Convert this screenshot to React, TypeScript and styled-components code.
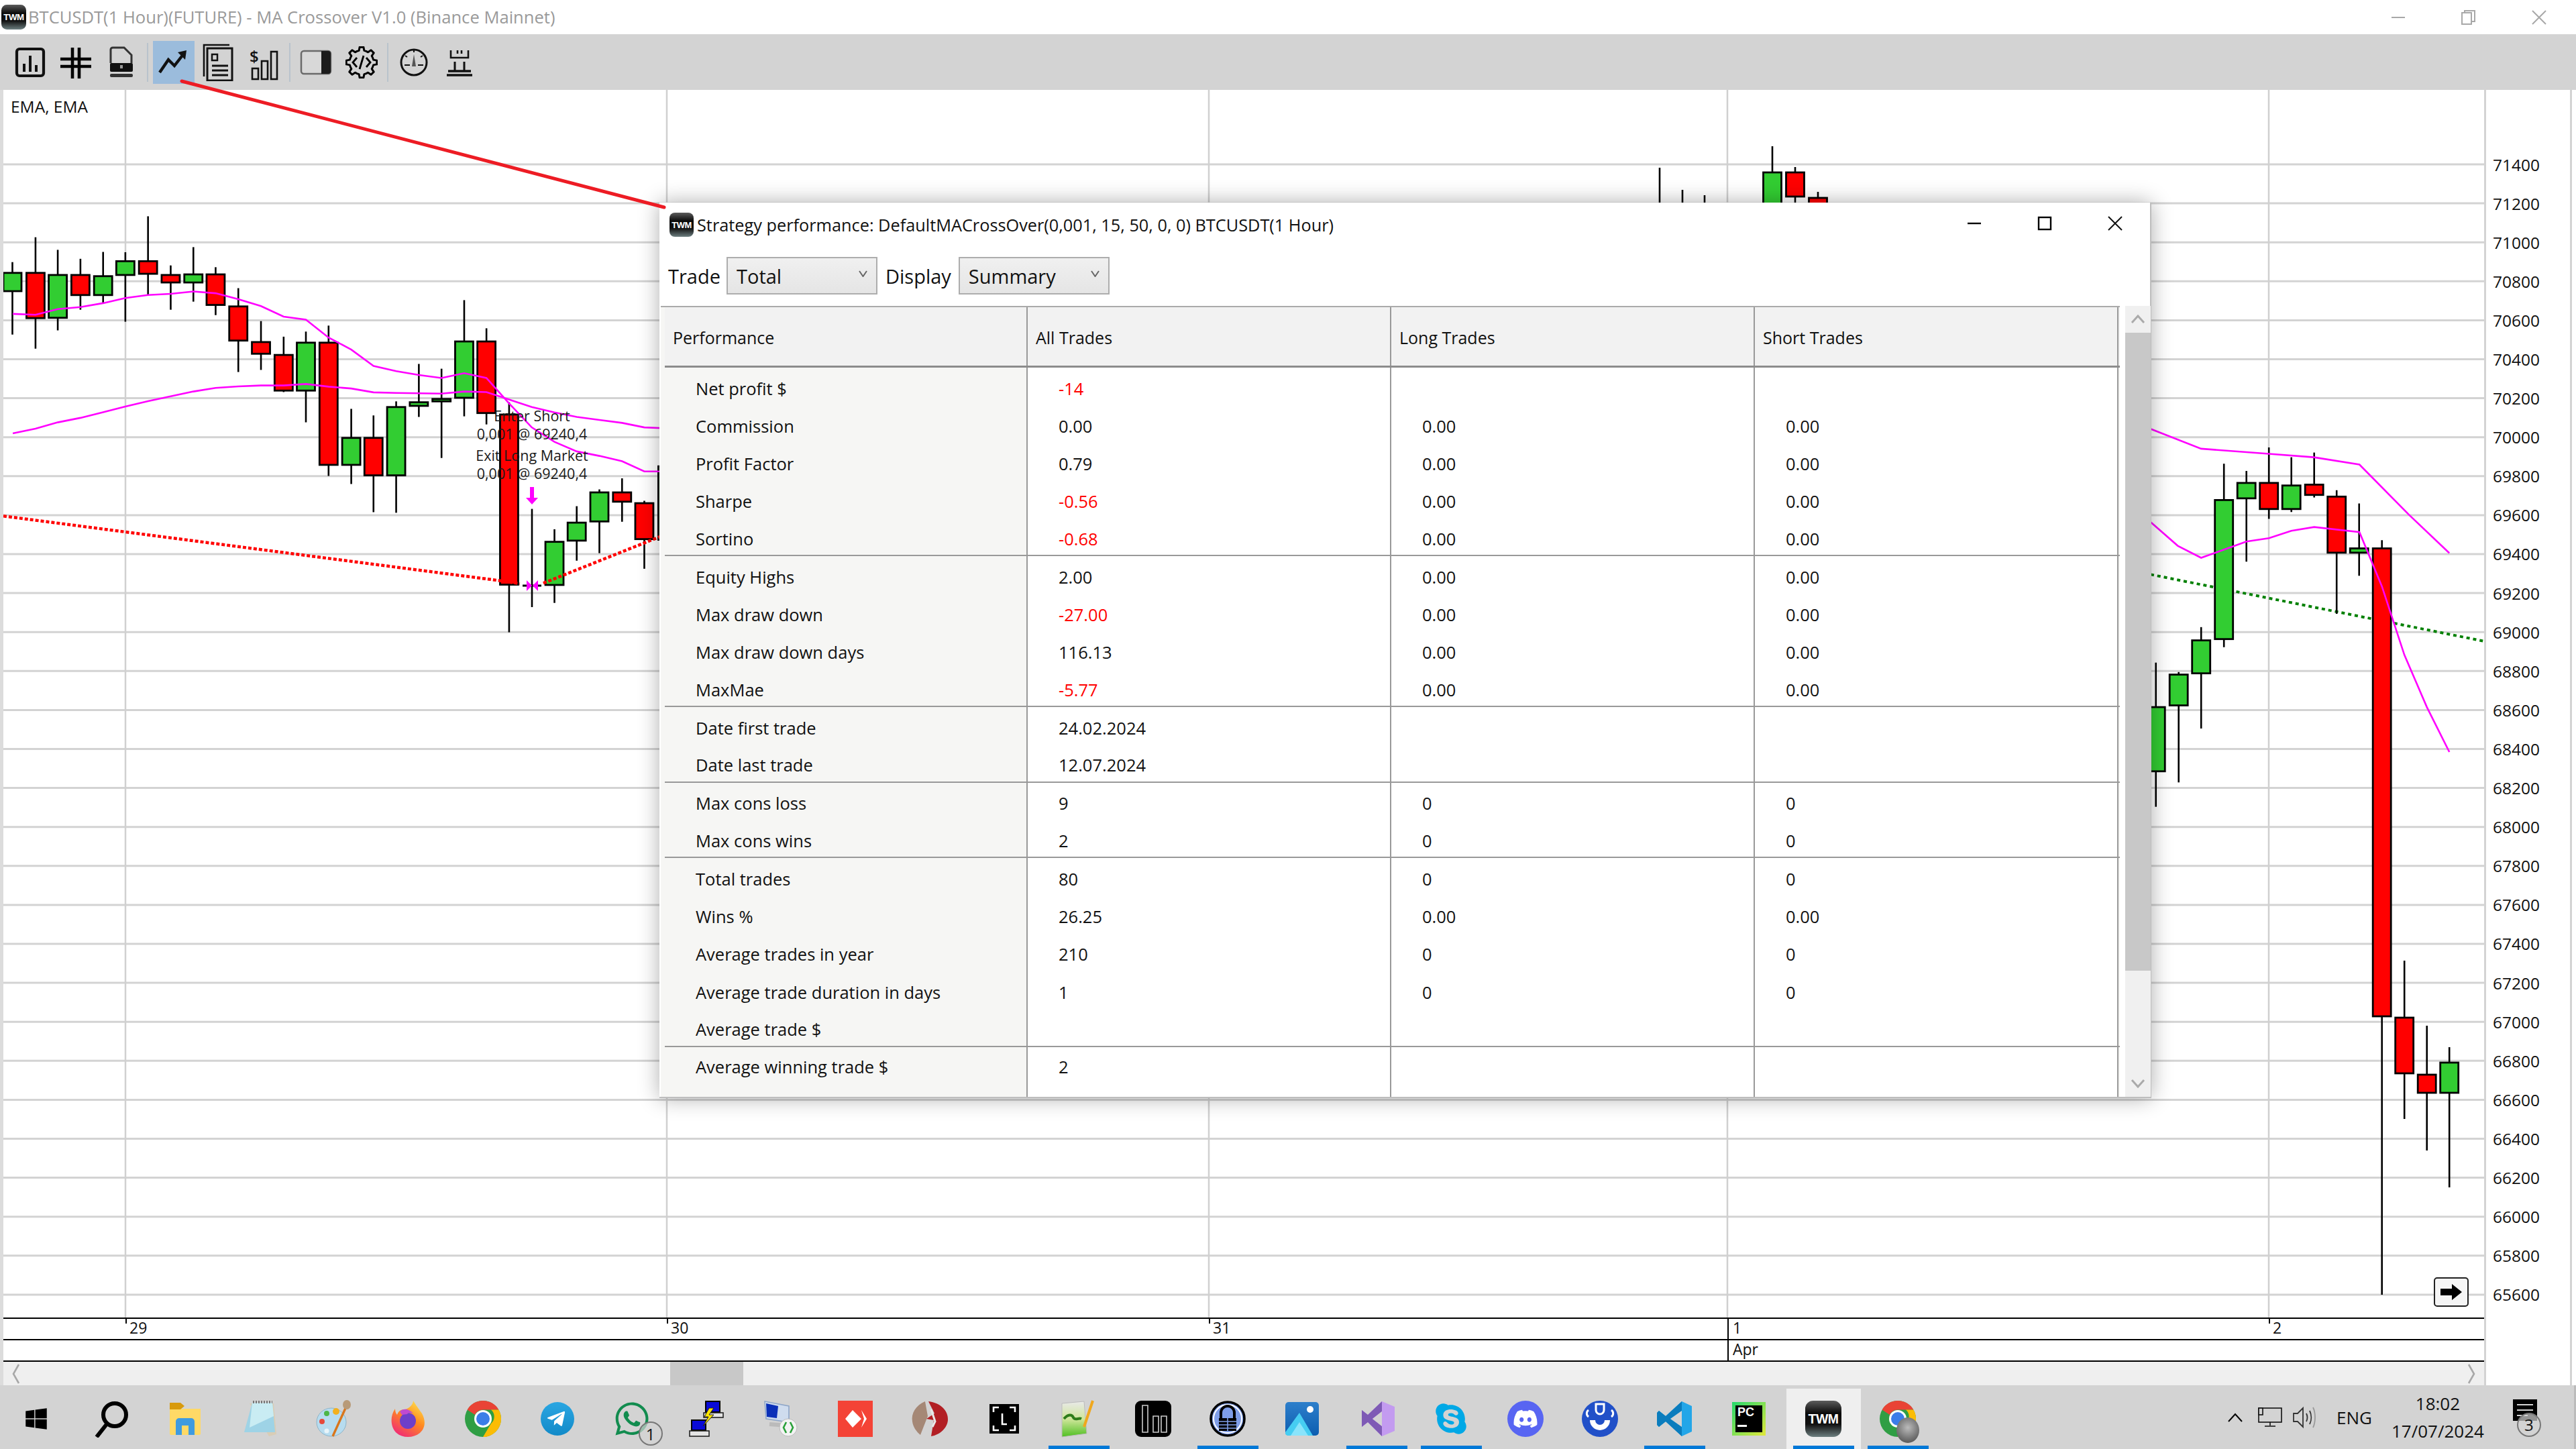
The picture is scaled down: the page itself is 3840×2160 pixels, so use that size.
import React from "react";
import styled, { createGlobalStyle } from "styled-components";
import { FaDiscord, FaSkype, FaTelegramPlane, FaWhatsapp, FaWindows } from "react-icons/fa";

const UI_FONT = `"Open Sans", "Noto Sans", sans-serif`;

const GlobalStyle = createGlobalStyle`
  html, body {
    margin: 0;
    padding: 0;
    background: #fff;
    overflow: hidden;
  }
  * {
    box-sizing: border-box;
  }
`;

// chart maths: price grid + candle spacing measured off the screenshot
const priceToY = (p: number) => 245 + ((71400 - p) / 200) * 58.1;
const PRICES = Array.from({ length: 30 }, (_, i) => 71400 - i * 200);
const DAY_LINES = [187, 994, 1802, 2575, 3382];

type Candle = [number, number, number, number, number, "g" | "r"];

const lx = (z: number) => z / 1.568;
const ly = (z: number) => 280 + z / 2.24;
const rx = (z: number) => 3100 + z / 2.119;
const ry = (z: number) => 600 + z / 1.568;

const leftRaw: Candle[] = [
  [29, 248, 490, 284, 345, "g"],
  [83, 165, 537, 284, 435, "r"],
  [135, 207, 476, 291, 434, "g"],
  [188, 237, 407, 291, 358, "r"],
  [241, 214, 383, 295, 358, "g"],
  [293, 215, 447, 245, 291, "g"],
  [346, 95, 357, 245, 287, "r"],
  [399, 259, 407, 291, 316, "r"],
  [452, 198, 380, 289, 316, "g"],
  [504, 265, 425, 289, 391, "r"],
  [557, 335, 615, 396, 510, "r"],
  [610, 445, 608, 515, 554, "r"],
  [663, 497, 682, 558, 677, "r"],
  [715, 480, 783, 517, 677, "g"],
  [768, 460, 962, 517, 925, "r"],
  [821, 738, 989, 835, 925, "g"],
  [873, 760, 1083, 835, 960, "r"],
  [926, 713, 1085, 732, 960, "g"],
  [979, 588, 765, 716, 728, "g"],
  [1032, 604, 902, 705, 713, "g"],
  [1085, 375, 763, 513, 701, "g"],
  [1137, 469, 790, 513, 752, "r"],
  [1190, 716, 1484, 757, 1325, "r"],
  [1296, 1140, 1386, 1182, 1326, "g"],
  [1348, 1063, 1245, 1118, 1178, "g"],
  [1401, 1007, 1220, 1017, 1114, "g"],
  [1454, 970, 1115, 1017, 1048, "r"],
  [1506, 1045, 1272, 1053, 1173, "r"],
  [1560, 930, 1300, 930, 1175, "g"],
];

const rightRaw: Candle[] = [
  [241, 608, 945, 712, 862, "g"],
  [313, 630, 888, 636, 708, "g"],
  [384, 525, 762, 556, 633, "g"],
  [456, 143, 572, 228, 553, "g"],
  [527, 160, 372, 188, 224, "g"],
  [598, 105, 272, 188, 249, "r"],
  [669, 128, 256, 194, 249, "g"],
  [741, 117, 222, 192, 216, "r"],
  [812, 205, 494, 220, 351, "r"],
  [883, 236, 405, 341, 351, "g"],
];

const candles: Candle[] = [
  ...leftRaw.map(([x, a, b, c, d, k]): Candle => [lx(x), ly(a), ly(b), ly(c), ly(d), k]),
  [2474, 250, 400, 400, 420, "g"],
  [2508, 283, 400, 400, 420, "g"],
  [2541, 291, 400, 400, 420, "g"],
  [2642, 218, 400, 257, 390, "g"],
  [2676, 249, 400, 257, 293, "r"],
  [2710, 286, 400, 295, 390, "r"],
  ...rightRaw.map(([x, a, b, c, d, k]): Candle => [rx(x), ry(a), ry(b), ry(c), ry(d), k]),
  [rx(955), ry(322), 1930, ry(341), 1515, "r"],
  [rx(1026), 1432, 1668, 1517, 1600, "r"],
  [rx(1097), 1529, 1715, 1602, 1629, "r"],
  [rx(1168), 1561, 1770, 1584, 1629, "g"],
];

const fastLeft = [
  [30, 421], [83, 424], [135, 405], [188, 398], [241, 385], [293, 368], [346, 358], [399, 354], [452, 346],
  [504, 352], [557, 372], [610, 395], [663, 430], [715, 440], [768, 500], [821, 540], [873, 595], [926, 612],
  [979, 625], [1032, 635], [1085, 619], [1137, 635], [1190, 720], [1243, 800], [1296, 848], [1348, 880],
  [1401, 895], [1454, 913], [1506, 947], [1560, 947],
];
const slowLeft = [
  [30, 820], [83, 804], [135, 783], [188, 768], [241, 749], [293, 730], [346, 712], [399, 696], [452, 680],
  [504, 668], [557, 663], [610, 660], [663, 660], [715, 655], [768, 664], [821, 670], [873, 683], [926, 685],
  [979, 686], [1032, 687], [1085, 680], [1137, 682], [1190, 707], [1243, 732], [1296, 750], [1348, 765],
  [1401, 775], [1454, 785], [1506, 800], [1560, 803],
];
const fastRight = [[225, 62], [384, 108], [598, 120], [740, 128], [884, 145], [1040, 262], [1168, 352]];
const slowRight = [
  [225, 280], [310, 335], [384, 363], [527, 325], [598, 317], [669, 300], [741, 291], [884, 303], [955, 430],
  [1026, 590], [1097, 712], [1168, 817],
];

const poly = (pts: number[][], fx: (n: number) => number, fy: (n: number) => number) =>
  pts.map(([x, y]) => `${fx(x).toFixed(1)},${fy(y).toFixed(1)}`).join(" ");

const gearPath = (cx: number, cy: number, outer: number, inner: number, teeth: number) => {
  const pts: string[] = [];
  for (let i = 0; i < teeth; i++) {
    const a = (i / teeth) * Math.PI * 2;
    const w = (Math.PI * 2) / teeth;
    [
      [inner, a - w * 0.5],
      [inner, a - w * 0.28],
      [outer, a - w * 0.16],
      [outer, a + w * 0.16],
      [inner, a + w * 0.28],
    ].forEach(([r, t]) => pts.push(`${(cx + r * Math.sin(t)).toFixed(1)},${(cy - r * Math.cos(t)).toFixed(1)}`));
  }
  return pts.join(" ");
};

type Row = [string, string, string, string];

const tableGroups: Row[][] = [
  [
    ["Net profit $", "-14", "", ""],
    ["Commission", "0.00", "0.00", "0.00"],
    ["Profit Factor", "0.79", "0.00", "0.00"],
    ["Sharpe", "-0.56", "0.00", "0.00"],
    ["Sortino", "-0.68", "0.00", "0.00"],
  ],
  [
    ["Equity Highs", "2.00", "0.00", "0.00"],
    ["Max draw down", "-27.00", "0.00", "0.00"],
    ["Max draw down days", "116.13", "0.00", "0.00"],
    ["MaxMae", "-5.77", "0.00", "0.00"],
  ],
  [
    ["Date first trade", "24.02.2024", "", ""],
    ["Date last trade", "12.07.2024", "", ""],
  ],
  [
    ["Max cons loss", "9", "0", "0"],
    ["Max cons wins", "2", "0", "0"],
  ],
  [
    ["Total trades", "80", "0", "0"],
    ["Wins %", "26.25", "0.00", "0.00"],
    ["Average trades in year", "210", "0", "0"],
    ["Average trade duration in days", "1", "0", "0"],
    ["Average trade $", "", "", ""],
  ],
  [["Average winning trade $", "2", "", ""]],
];

function PriceChart() {
  return (
    <svg width={3698} height={1830} viewBox="5 134 3698 1830" style={{ display: "block" }}>
      {PRICES.map((p) => (
        <line key={p} x1={5} x2={3703} y1={priceToY(p)} y2={priceToY(p)} stroke="#d3d3d3" strokeWidth={3} />
      ))}
      {DAY_LINES.map((x) => (
        <line key={x} x1={x} x2={x} y1={134} y2={1964} stroke="#d0d0d0" strokeWidth={2.5} />
      ))}

      <polyline
        points={`3206,${ry(402)} 3703,${ry(558)}`}
        fill="none"
        stroke="#008000"
        strokeWidth={4}
        strokeDasharray="5 5"
      />

      {candles.map(([x, top, bottom, bodyTop, bodyBottom, kind], i) => (
        <g key={i}>
          <line x1={x} x2={x} y1={top} y2={bottom} stroke="#000" strokeWidth={2.6} />
          <rect
            x={x - 13.5}
            y={bodyTop}
            width={27}
            height={bodyBottom - bodyTop}
            fill={kind === "g" ? "#32cd32" : "#ff0000"}
            stroke="#000"
            strokeWidth={2.8}
          />
        </g>
      ))}

      {/* the doji with the two entries on it */}
      <line x1={793} x2={793} y1={ly(1072)} y2={ly(1400)} stroke="#000" strokeWidth={2.6} />
      <line x1={779} x2={807} y1={873} y2={873} stroke="#000" strokeWidth={3} />

      <polyline
        points={`5,${ly(1096)} ${lx(1170)},${ly(1312)} ${lx(1215)},${ly(1322)}`}
        fill="none"
        stroke="#ff0000"
        strokeWidth={4.5}
        strokeDasharray="5 3"
      />
      <polyline
        points={`${lx(1270)},${ly(1320)} ${lx(1560)},${ly(1155)}`}
        fill="none"
        stroke="#ff0000"
        strokeWidth={4.5}
        strokeDasharray="5 3"
      />

      <polyline points={poly(fastLeft, lx, ly)} fill="none" stroke="#ff00ff" strokeWidth={2.6} />
      <polyline points={poly(slowLeft, lx, ly)} fill="none" stroke="#ff00ff" strokeWidth={2.6} />
      <polyline points={poly(fastRight, rx, ry)} fill="none" stroke="#ff00ff" strokeWidth={2.6} />
      <polyline points={poly(slowRight, rx, ry)} fill="none" stroke="#ff00ff" strokeWidth={2.6} />

      <path d="M790 726h6v16h6l-9 10-9-10h6z" fill="#ff00ff" />
      <path d="M785 865l8 8-8 8zM802 865l-8 8 8 8z" fill="#ff00ff" />

      <g fontFamily={UI_FONT} fontSize={21.5} fill="#1a1a1a" textAnchor="middle">
        <text x={793} y={628}>Enter Short</text>
        <text x={793} y={655}>0,001 @ 69240,4</text>
        <text x={793} y={687}>Exit Long Market</text>
        <text x={793} y={714}>0,001 @ 69240,4</text>
      </g>
    </svg>
  );
}

const TB = { stroke: "#111", fill: "none" };

const ToolIcons = {
  bars: (
    <svg width="48" height="48" viewBox="0 0 48 48">
      <rect x="4" y="4" width="40" height="40" rx="4" {...TB} strokeWidth="4.2" />
      <path d="M15 26v12M24 14v24M33 28v10" {...TB} strokeWidth="4" />
    </svg>
  ),
  grid: (
    <svg width="48" height="48" viewBox="0 0 48 48">
      <path d="M19 2v46M29 2v46M1 19h46M1 30h46" stroke="#000" strokeWidth="4.6" fill="none" />
    </svg>
  ),
  lockDoc: (
    <svg width="48" height="48" viewBox="0 0 48 48">
      <path d="M8 25V5a3 3 0 0 1 3-3h17l11 11v12" fill="#d3d3d3" stroke="#333" strokeWidth="3" />
      <rect x="7" y="25" width="34" height="13" rx="2" fill="#111" />
      <rect x="22" y="28" width="4" height="5" fill="#999" />
      <rect x="7" y="41" width="34" height="5" rx="2" fill="#333" />
    </svg>
  ),
  trend: (
    <svg width="48" height="48" viewBox="0 0 48 48">
      <path d="M3 39l13-19 9 9 14-18" {...TB} strokeWidth="4.4" />
      <path d="M30 9l13-3-2 14z" fill="#111" />
    </svg>
  ),
  report: (
    <svg width="48" height="56" viewBox="0 0 48 56">
      <path d="M3 49V2h38" {...TB} strokeWidth="2.6" />
      <rect x="8" y="7" width="37" height="48" {...TB} strokeWidth="3" />
      <rect x="15" y="16" width="8" height="9" {...TB} strokeWidth="2.5" />
      <path d="M15 33h24M15 40h24M15 47h24" {...TB} strokeWidth="3" />
    </svg>
  ),
  money: (
    <svg width="48" height="56" viewBox="0 0 48 56">
      <text x="3" y="28" fontFamily={UI_FONT} fontSize="24" fontWeight="600" fill="#111">$</text>
      <rect x="7" y="37" width="9" height="16" {...TB} strokeWidth="2.6" />
      <rect x="21" y="26" width="9" height="27" {...TB} strokeWidth="2.6" />
      <rect x="35" y="12" width="9" height="41" {...TB} strokeWidth="2.6" />
    </svg>
  ),
  panel: (
    <svg width="48" height="48" viewBox="0 0 48 48">
      <rect x="2" y="7" width="44" height="34" rx="4" fill="#d8d8d8" stroke="#6a6a6a" strokeWidth="2.5" />
      <path d="M32 7h10a4 4 0 0 1 4 4v26a4 4 0 0 1-4 4H32z" fill="#1c1c1c" />
    </svg>
  ),
  gear: (
    <svg width="48" height="48" viewBox="0 0 48 48">
      <polygon points={gearPath(24, 24, 23, 18, 8)} fill="none" stroke="#000" strokeWidth="3" strokeLinejoin="round" />
      <path d="M17 17l-6 7 6 7M31 17l6 7-6 7M27 14l-6 20" fill="none" stroke="#000" strokeWidth="2.8" />
    </svg>
  ),
  gauge: (
    <svg width="48" height="48" viewBox="0 0 48 48">
      <circle cx="24" cy="24" r="19" {...TB} strokeWidth="3" />
      <path d="M24 12l3 18h-6z" fill="#555" />
      <path d="M10 28h8M30 28h8M24 6v3M11 14l3 2M37 14l-3 2" {...TB} strokeWidth="2" />
    </svg>
  ),
  rook: (
    <svg width="48" height="48" viewBox="0 0 48 48">
      <path d="M11 6v11h26V6M21 6v5M27 6v5" {...TB} strokeWidth="2.6" />
      <path d="M17 23v15M31 23v15" {...TB} strokeWidth="3" />
      <path d="M7 37h34M5 43h38" {...TB} strokeWidth="3.4" />
    </svg>
  ),
};

const Icon = {
  search: (
    <svg width="56" height="56" viewBox="0 0 56 56">
      <circle cx="34" cy="22" r="17" fill="none" stroke="#000" strokeWidth="6" />
      <path d="M22 36L7 55" stroke="#000" strokeWidth="6" />
    </svg>
  ),
  folder: (
    <svg width="48" height="48" viewBox="0 0 48 48">
      <path d="M1 9h46v37a2 2 0 0 1-2 2H3a2 2 0 0 1-2-2z" fill="#ffd966" />
      <path d="M1 0h16l6 5-6 5H1z" fill="#d89a0c" />
      <path d="M10 48V28a5 5 0 0 1 5-5h18a5 5 0 0 1 5 5v20h-9V34H19v14z" fill="#3f9be0" />
    </svg>
  ),
  notepad: (
    <svg width="54" height="54" viewBox="0 0 54 54">
      <path d="M12 4h36l4 46-11 3z" fill="#d9cdb6" />
      <path d="M16 3h30l4 44H4z" fill="#9ed3e6" />
      <path d="M16 3h30l2 20L12 40z" fill="#c9ecf3" />
      <path d="M17 2h29" stroke="#777" strokeWidth="4" strokeDasharray="2 2" />
    </svg>
  ),
  paint: (
    <svg width="56" height="56" viewBox="0 0 56 56">
      <ellipse cx="24" cy="33" rx="22" ry="21" fill="#b7dcef" stroke="#8db4c8" />
      <circle cx="17" cy="20" r="4" fill="#4cb648" />
      <circle cx="31" cy="17" r="5" fill="#f2b01e" />
      <circle cx="10" cy="32" r="4" fill="#e64a3c" />
      <circle cx="17" cy="46" r="3.5" fill="#e8f4f9" />
      <path d="M46 10L26 54" stroke="#d9761c" strokeWidth="3.4" />
      <ellipse cx="47" cy="7" rx="6" ry="7" fill="#b89a78" />
    </svg>
  ),
  firefox: (
    <svg width="56" height="56" viewBox="0 0 56 56">
      <defs>
        <linearGradient id="ffx" x1="0.8" y1="0" x2="0.2" y2="1">
          <stop offset="0" stopColor="#ffe14d" />
          <stop offset="0.45" stopColor="#ff8a1f" />
          <stop offset="1" stopColor="#f0247c" />
        </linearGradient>
      </defs>
      <path d="M35 1c5 8 6 9 13 19 6 11 5 22-3 29-10 8-26 8-35 0C1 41 0 24 8 13c0 4 1 7 3 9 2-6 6-8 11-8 4 0 13-6 13-13z" fill="url(#ffx)" />
      <circle cx="27" cy="31" r="12" fill="#6e3fc9" />
      <path d="M15 17c6-6 15-3 20 3-5-2-8-1-9 1l-8 1z" fill="#c04ad0" />
    </svg>
  ),
  chrome: (
    <svg width="56" height="56" viewBox="0 0 56 56">
      <circle cx="28" cy="28" r="27" fill="#2f9e44" />
      <path d="M28 1a27 27 0 0 1 23.4 13.5H28a13.5 13.5 0 0 0-12 7.5L4.6 14.5A27 27 0 0 1 28 1z" fill="#e94335" />
      <path d="M51.4 14.5A27 27 0 0 1 28 55l12-20a13.5 13.5 0 0 0 0-20.5z" fill="#fbbc05" />
      <circle cx="28" cy="28" r="13" fill="#fff" />
      <circle cx="28" cy="28" r="10" fill="#3b7de8" />
    </svg>
  ),
  telegram: (
    <svg width="50" height="50" viewBox="0 0 50 50">
      <defs>
        <linearGradient id="tg" x1="0" y1="0" x2="0" y2="1">
          <stop offset="0" stopColor="#2aa6e2" />
          <stop offset="1" stopColor="#128ac8" />
        </linearGradient>
      </defs>
      <circle cx="25" cy="25" r="25" fill="url(#tg)" />
    </svg>
  ),
  network: (
    <svg width="52" height="54" viewBox="0 0 52 54">
      <rect x="25" y="1" width="21" height="16" fill="#0a0ad8" stroke="#000" strokeWidth="2" />
      <rect x="22" y="18" width="29" height="7" fill="#e4e4e4" stroke="#222" strokeWidth="1.6" />
      <rect x="4" y="29" width="21" height="15" fill="#0a0ad8" stroke="#000" strokeWidth="2" />
      <rect x="1" y="45" width="29" height="8" fill="#e4e4e4" stroke="#222" strokeWidth="1.6" />
      <path d="M30 11l-7 13h6l-8 14 16-17h-7l7-10z" fill="#ffe600" stroke="#222" strokeWidth="1" />
    </svg>
  ),
  remote: (
    <svg width="50" height="54" viewBox="0 0 50 54">
      <path d="M1 1l36 7v24L3 27z" fill="#cfdcee" stroke="#8ea6c8" strokeWidth="1.6" />
      <path d="M3 4l18 4-2 18-15-2z" fill="#0a2fb8" />
      <path d="M8 35l26 2" stroke="#bbb" strokeWidth="6" />
      <circle cx="36" cy="40" r="13" fill="#f3f3f3" stroke="#bbb" />
      <path d="M33 32l-4 8 4 8M39 32l4 8-4 8" fill="none" stroke="#2aa13a" strokeWidth="2.6" />
    </svg>
  ),
  anydesk: (
    <svg width="52" height="54" viewBox="0 0 52 54">
      <rect width="52" height="54" fill="#f44336" />
      <path d="M22 14l13 13-13 13-11-13zM35 14l8 13-8 13 4-13z" fill="#fff" />
    </svg>
  ),
  atv: (
    <svg width="56" height="56" viewBox="0 0 56 56">
      <path d="M21 2C7 8 0 20 2 32c1 8 6 15 12 20L25 24z" fill="#a58876" />
      <path d="M26 2c18 2 30 14 29 28-1 12-12 22-25 24l4-24-11-2 12-8z" fill="#b21f24" />
      <path d="M30 14l6 18-4 8" stroke="#e8e8e8" strokeWidth="3" fill="none" />
    </svg>
  ),
  bracket: (
    <svg width="44" height="44" viewBox="0 0 44 44">
      <rect width="44" height="44" fill="#000" />
      <path d="M6 12V5h8M30 5h8v7M6 32v7h8M30 39h8v-7M19 14v16h7" fill="none" stroke="#fff" strokeWidth="2.6" />
    </svg>
  ),
  notepadpp: (
    <svg width="56" height="56" viewBox="0 0 56 56">
      <defs>
        <linearGradient id="npp" x1="0" y1="0" x2="0" y2="1">
          <stop offset="0" stopColor="#e9e9e9" />
          <stop offset="0.5" stopColor="#cfe69a" />
          <stop offset="1" stopColor="#4fbf22" />
        </linearGradient>
      </defs>
      <path d="M3 5l33-3 4 48-37 5z" fill="url(#npp)" stroke="#bbb" />
      <path d="M49 1L36 40" stroke="#f0a81e" strokeWidth="4" />
      <path d="M6 28c6-7 12-7 14-2s8 0 12 2" fill="none" stroke="#2e7d1a" strokeWidth="4" />
    </svg>
  ),
  bars: (
    <svg width="54" height="54" viewBox="0 0 54 54">
      <rect width="54" height="54" rx="9" fill="#000" />
      <path d="M11 7h8v40h-8zM27 23h8v24h-8zM39 23h8v24h-8z" fill="none" stroke="#ccc" strokeWidth="1.6" />
    </svg>
  ),
  lock: (
    <svg width="54" height="54" viewBox="0 0 54 54">
      <circle cx="27" cy="27" r="25" fill="#7f9ee8" stroke="#000" strokeWidth="3.6" />
      <circle cx="27" cy="27" r="21" fill="none" stroke="#fff" strokeWidth="2" />
      <path d="M17 26V18a10 10 0 0 1 20 0v8" fill="none" stroke="#000" strokeWidth="4" />
      <rect x="14" y="26" width="26" height="19" fill="#000" />
      <path d="M14 31h26M14 36h26M14 41h26M27 26v19" stroke="#7f9ee8" strokeWidth="1.6" />
    </svg>
  ),
  photos: (
    <svg width="50" height="50" viewBox="0 0 50 50">
      <defs>
        <linearGradient id="ph" x1="0" y1="0" x2="0" y2="1">
          <stop offset="0" stopColor="#2d7fcb" />
          <stop offset="1" stopColor="#0c5db0" />
        </linearGradient>
      </defs>
      <rect width="50" height="50" rx="5" fill="url(#ph)" />
      <circle cx="37" cy="11" r="5" fill="#fff" />
      <path d="M0 45L21 16l20 34H4a4 4 0 0 1-4-5z" fill="#46cdf2" />
      <path d="M8 50l13-20 13 20z" fill="#8ae4fb" />
    </svg>
  ),
  vs: (
    <svg width="54" height="54" viewBox="0 0 54 54">
      <path d="M35 1l19 8v36l-19 8-21-21-9 7V14l9 7z" fill="#c39bf0" />
      <path d="M35 1L14 21 5 14v25l9-7 21 21V38L21 27 35 16z" fill="#7e5ab5" />
      <path d="M35 16L21 27l14 11z" fill="#d3d3d3" />
    </svg>
  ),
  pokeball: (
    <svg width="54" height="54" viewBox="0 0 54 54">
      <circle cx="27" cy="27" r="27" fill="#2150c8" />
      <path d="M12 29a15 15 0 0 0 30 0h-8a7 7 0 0 1-14 0z" fill="#fff" />
      <path d="M21 5h12v9a6 6 0 0 1-12 0z" fill="none" stroke="#fff" strokeWidth="3" />
      <path d="M10 14a6 6 0 0 0 0 10M44 14a6 6 0 0 1 0 10" fill="none" stroke="#fff" strokeWidth="3" />
    </svg>
  ),
  vscode: (
    <svg width="54" height="54" viewBox="0 0 54 54">
      <path d="M38 1l15 7v38l-15 7-24-22-10 8-3-3V18l3-3 10 8z" fill="#23a6e8" />
      <path d="M38 1v14L21 27l17 12v14L14 31l-10 8-3-3V18l3-3 10 8z" fill="#0a7cbd" />
      <path d="M38 15v24L21 27z" fill="#d3d3d3" />
    </svg>
  ),
};

export default function App() {
  return (
    <Page>
      <GlobalStyle />

      <TitleBar>
        <TwmLogo $size={37} />
        <TitleText>BTCUSDT(1 Hour)(FUTURE) - MA Crossover V1.0 (Binance Mainnet)</TitleText>
        <WindowButtons>
          <WindowButton>
            <svg width="22" height="22" viewBox="0 0 22 22">
              <path d="M1 11h20" stroke="#a8a8a8" strokeWidth="2" />
            </svg>
          </WindowButton>
          <WindowButton>
            <svg width="22" height="22" viewBox="0 0 22 22">
              <rect x="1" y="4" width="14" height="17" fill="none" stroke="#a8a8a8" strokeWidth="2" />
              <path d="M5 4V1h15v16h-5" fill="none" stroke="#a8a8a8" strokeWidth="2" />
            </svg>
          </WindowButton>
          <WindowButton>
            <svg width="22" height="22" viewBox="0 0 22 22">
              <path d="M1 1l20 20M21 1L1 21" stroke="#a8a8a8" strokeWidth="2" />
            </svg>
          </WindowButton>
        </WindowButtons>
      </TitleBar>

      <Toolbar>
        <ToolSlot>{ToolIcons.bars}</ToolSlot>
        <ToolSlot>{ToolIcons.grid}</ToolSlot>
        <ToolSlot>{ToolIcons.lockDoc}</ToolSlot>
        <ToolSeparator />
        <ToolActive>{ToolIcons.trend}</ToolActive>
        <ToolSlot>{ToolIcons.report}</ToolSlot>
        <ToolSlot>{ToolIcons.money}</ToolSlot>
        <ToolSeparator />
        <ToolSlot>{ToolIcons.panel}</ToolSlot>
        <ToolSlot>{ToolIcons.gear}</ToolSlot>
        <ToolSeparator />
        <ToolSlot>{ToolIcons.gauge}</ToolSlot>
        <ToolSlot>{ToolIcons.rook}</ToolSlot>
      </Toolbar>

      <Workspace>
        <ChartColumn>
          <ChartPane>
            <PriceChart />
            <IndicatorLabel>EMA, EMA</IndicatorLabel>
            <JumpButton>
              <svg width="34" height="26" viewBox="0 0 34 26">
                <path d="M1 8h17V1l15 12-15 12v-7H1z" fill="#000" />
              </svg>
            </JumpButton>
          </ChartPane>
          <TimeRow>
            <TimeCell $width={182} />
            <TimeCell $width={807} $tick>29</TimeCell>
            <TimeCell $width={808} $tick>30</TimeCell>
            <TimeCell $width={773} $tick>31</TimeCell>
            <TimeCell $width={807} $rule>1</TimeCell>
            <TimeCell $width={321} $tick>2</TimeCell>
          </TimeRow>
          <TimeRow>
            <TimeCell $width={182} />
            <TimeCell $width={807} />
            <TimeCell $width={808} />
            <TimeCell $width={773} />
            <TimeCell $width={807} $rule>Apr</TimeCell>
          </TimeRow>
          <HScroll>
            <HArrow>
              <svg width="14" height="34" viewBox="0 0 14 34">
                <path d="M11 3L3 17l8 14" fill="none" stroke="#a8a8a8" strokeWidth="2.6" />
              </svg>
            </HArrow>
            <HThumb />
            <HArrow>
              <svg width="14" height="34" viewBox="0 0 14 34">
                <path d="M3 3l8 14-8 14" fill="none" stroke="#a8a8a8" strokeWidth="2.6" />
              </svg>
            </HArrow>
          </HScroll>
        </ChartColumn>
        <PriceAxis>
          {PRICES.map((p) => (
            <PriceLabel key={p}>{p}</PriceLabel>
          ))}
        </PriceAxis>
      </Workspace>

      <Taskbar>
        <TaskSlot><FaWindows size={36} color="#000" /></TaskSlot>
        <TaskSlot>{Icon.search}</TaskSlot>
        <TaskSlot>{Icon.folder}</TaskSlot>
        <TaskSlot>{Icon.notepad}</TaskSlot>
        <TaskSlot>{Icon.paint}</TaskSlot>
        <TaskSlot>{Icon.firefox}</TaskSlot>
        <TaskSlot>{Icon.chrome}</TaskSlot>
        <TaskSlot>
          {Icon.telegram}
          <PlaneGlyph><FaTelegramPlane size={30} color="#fff" /></PlaneGlyph>
        </TaskSlot>
        <TaskSlot>
          <FaWhatsapp size={56} color="#128c4f" />
          <CountBadge $right={10} $bottom={5}>1</CountBadge>
        </TaskSlot>
        <TaskSlot>{Icon.network}</TaskSlot>
        <TaskSlot>{Icon.remote}</TaskSlot>
        <TaskSlot>{Icon.anydesk}</TaskSlot>
        <TaskSlot>{Icon.atv}</TaskSlot>
        <TaskSlot>{Icon.bracket}</TaskSlot>
        <TaskSlot $running>{Icon.notepadpp}</TaskSlot>
        <TaskSlot>{Icon.bars}</TaskSlot>
        <TaskSlot $running>{Icon.lock}</TaskSlot>
        <TaskSlot>{Icon.photos}</TaskSlot>
        <TaskSlot $running>{Icon.vs}</TaskSlot>
        <TaskSlot $running>
          <FaSkype size={52} color="#00a8e6" />
        </TaskSlot>
        <TaskSlot>
          <DiscordDisc><FaDiscord size={38} color="#fff" /></DiscordDisc>
        </TaskSlot>
        <TaskSlot>{Icon.pokeball}</TaskSlot>
        <TaskSlot $running>{Icon.vscode}</TaskSlot>
        <TaskSlot>
          <PyCharmTile>
            <PyCharmInner>PC<PyCharmBar /></PyCharmInner>
          </PyCharmTile>
        </TaskSlot>
        <TaskSlot $active $running>
          <TwmLogo $size={54} />
        </TaskSlot>
        <TaskSlot $running>
          {Icon.chrome}
          <Avatar />
        </TaskSlot>

        <Tray>
          <TrayIcon>
            <svg width="24" height="16" viewBox="0 0 24 16">
              <path d="M2 14L12 3l10 11" fill="none" stroke="#000" strokeWidth="2" />
            </svg>
          </TrayIcon>
          <TrayIcon>
            <svg width="38" height="30" viewBox="0 0 38 30" style={{ height: 44 }}>
              <rect x="2" y="1" width="34" height="21" fill="none" stroke="#111" strokeWidth="1.6" />
              <rect x="2" y="1" width="6" height="10" fill="#d3d3d3" stroke="#111" strokeWidth="1.6" />
              <path d="M19 22v5M11 28h16" stroke="#111" strokeWidth="1.6" />
            </svg>
          </TrayIcon>
          <TrayIcon>
            <svg width="38" height="40" viewBox="0 0 38 40">
              <path d="M2 14h6l8-8v28l-8-8H2z" fill="none" stroke="#333" strokeWidth="1.8" />
              <path d="M21 14c2 4 2 8 0 12M26 10c3 6 3 14 0 20" fill="none" stroke="#333" strokeWidth="1.8" />
              <path d="M31 5c4 8 4 22 0 30" fill="none" stroke="#999" strokeWidth="1.8" />
            </svg>
          </TrayIcon>
          <TrayLang>ENG</TrayLang>
          <Clock>
            <span>18:02</span>
            <span>17/07/2024</span>
          </Clock>
          <Notification>
            <NoteIcon>
              <svg width="36" height="32" viewBox="0 0 36 32">
                <rect width="36" height="32" fill="#000" />
                <path d="M6 8h24M6 16h24M6 24h16" stroke="#d3d3d3" strokeWidth="2" />
              </svg>
            </NoteIcon>
            <CountBadge $right={-6} $bottom={-2}>3</CountBadge>
          </Notification>
        </Tray>
      </Taskbar>

      <DialogWindow>
        <DialogTitle>
          <TwmLogo $size={36} />
          <DialogTitleText>Strategy performance: DefaultMACrossOver(0,001, 15, 50, 0, 0) BTCUSDT(1 Hour)</DialogTitleText>
          <WindowButtons>
            <DialogButton>
              <svg width="22" height="22" viewBox="0 0 22 22">
                <path d="M1 11h20" stroke="#000" strokeWidth="2.4" />
              </svg>
            </DialogButton>
            <DialogButton>
              <svg width="22" height="22" viewBox="0 0 22 22">
                <rect x="2" y="2" width="18" height="18" fill="none" stroke="#000" strokeWidth="2.4" />
              </svg>
            </DialogButton>
            <DialogButton>
              <svg width="22" height="22" viewBox="0 0 22 22">
                <path d="M1 1l20 20M21 1L1 21" stroke="#111" strokeWidth="2" />
              </svg>
            </DialogButton>
          </WindowButtons>
        </DialogTitle>

        <FilterRow>
          <FilterLabel $gap={9}>Trade</FilterLabel>
          <SelectBox>
            Total
            <SelectChevron>
              <svg width="13" height="10" viewBox="0 0 13 10">
                <path d="M1 1l5.5 8L12 1" fill="none" stroke="#666" strokeWidth="2" />
              </svg>
            </SelectChevron>
          </SelectBox>
          <FilterLabel $gap={11}>Display</FilterLabel>
          <SelectBox>
            Summary
            <SelectChevron>
              <svg width="13" height="10" viewBox="0 0 13 10">
                <path d="M1 1l5.5 8L12 1" fill="none" stroke="#666" strokeWidth="2" />
              </svg>
            </SelectChevron>
          </SelectBox>
        </FilterRow>

        <TableArea>
          <PerfTable>
            <HeaderRow>
              <HeaderCell>Performance</HeaderCell>
              <HeaderCell>All Trades</HeaderCell>
              <HeaderCell>Long Trades</HeaderCell>
              <HeaderCell>Short Trades</HeaderCell>
            </HeaderRow>
            {tableGroups.map((group, g) => (
              <RowGroup key={g} $last={g === tableGroups.length - 1}>
                {group.map(([name, all, long, short]) => (
                  <PerfRow key={name}>
                    <NameCell>{name}</NameCell>
                    <ValueCell $negative={all.startsWith("-")}>{all}</ValueCell>
                    <ValueCell>{long}</ValueCell>
                    <ValueCell>{short}</ValueCell>
                  </PerfRow>
                ))}
              </RowGroup>
            ))}
            <RowGroupFill>
              <NameFill />
              <ValueFill />
              <ValueFill />
              <ValueFill />
            </RowGroupFill>
          </PerfTable>
          <VScroll>
            <VArrow>
              <svg width="22" height="14" viewBox="0 0 22 14">
                <path d="M2 12l9-10 9 10" fill="none" stroke="#aaa" strokeWidth="3" />
              </svg>
            </VArrow>
            <VThumb />
            <VArrow $bottom>
              <svg width="22" height="14" viewBox="0 0 22 14">
                <path d="M2 2l9 10 9-10" fill="none" stroke="#aaa" strokeWidth="3" />
              </svg>
            </VArrow>
          </VScroll>
        </TableArea>
      </DialogWindow>

      <AnnotationLayer width={3840} height={2160} viewBox="0 0 3840 2160">
        <line x1={271} y1={121} x2={990} y2={309} stroke="#ed1c24" strokeWidth={5} strokeLinecap="round" />
      </AnnotationLayer>
    </Page>
  );
}

const Page = styled.div`
  position: relative;
  width: 3840px;
  height: 2160px;
  display: flex;
  flex-direction: column;
  overflow: hidden;
  background: #fff;
  font-family: ${UI_FONT};
  color: #111;
`;

const TitleBar = styled.div`
  height: 51px;
  flex: none;
  display: flex;
  align-items: center;
  padding-left: 2px;
  background: #fff;
`;

const TitleText = styled.div`
  margin-left: 3px;
  font-size: 25.6px;
  color: #9a9a9a;
  flex: 1;
  white-space: nowrap;
`;

const TwmLogo = styled.div.attrs({ children: "TWM" })<{ $size: number }>`
  width: ${(p) => p.$size}px;
  height: ${(p) => p.$size}px;
  flex: none;
  display: flex;
  align-items: center;
  justify-content: center;
  border-radius: ${(p) => p.$size * 0.22}px;
  background: linear-gradient(180deg, #5c5c5c 0%, #0a0a0a 35%, #111 65%, #6d7f80 100%);
  color: #fff;
  font-family: "Liberation Sans", sans-serif;
  font-weight: 700;
  font-size: ${(p) => p.$size * 0.36}px;
  letter-spacing: -0.5px;
`;

const WindowButtons = styled.div`
  display: flex;
  flex: none;
`;

const WindowButton = styled.div`
  width: 105px;
  height: 48px;
  display: flex;
  align-items: center;
  justify-content: center;
  &:last-child {
    margin-right: 3px;
  }
`;

const Toolbar = styled.div`
  height: 83px;
  flex: none;
  display: flex;
  align-items: center;
  padding-left: 11px;
  background: #d3d3d3;
`;

const ToolSlot = styled.div`
  width: 68px;
  height: 64px;
  flex: none;
  display: flex;
  align-items: center;
  justify-content: center;
`;

const ToolActive = styled(ToolSlot)`
  width: 62px;
  margin: 0 1px 0 3px;
  background: #9bbcdc;
`;

const ToolSeparator = styled.div`
  width: 2px;
  height: 58px;
  margin: 0 4px;
  background: #b9c3cc;
`;

const Workspace = styled.div`
  flex: 1;
  min-height: 0;
  display: flex;
  border-left: 5px solid #dcdcdc;
  background: #fff;
`;

const ChartColumn = styled.div`
  width: 3698px;
  flex: none;
  display: flex;
  flex-direction: column;
`;

const ChartPane = styled.div`
  position: relative;
  height: 1830px;
  flex: none;
`;

const IndicatorLabel = styled.div`
  position: absolute;
  left: 11px;
  top: 8px;
  font-size: 24.5px;
  color: #111;
`;

const JumpButton = styled.div`
  position: absolute;
  left: 3623px;
  top: 1770px;
  width: 52px;
  height: 44px;
  display: flex;
  align-items: center;
  justify-content: center;
  border: 2px solid #222;
  border-radius: 5px;
  background: #f5f5f5;
`;

const TimeRow = styled.div`
  height: 32px;
  flex: none;
  display: flex;
  border-top: 2.5px solid #000;
`;

const TimeCell = styled.div<{ $width: number; $tick?: boolean; $rule?: boolean }>`
  position: relative;
  width: ${(p) => p.$width}px;
  flex: none;
  padding-left: 6px;
  font-size: 23px;
  line-height: 26px;
  color: #111;
  white-space: nowrap;
  border-left: ${(p) => (p.$rule ? "2px solid #000" : "none")};
  &::before {
    content: "";
    display: ${(p) => (p.$tick ? "block" : "none")};
    position: absolute;
    left: 0;
    top: 0;
    width: 2px;
    height: 7px;
    background: #000;
  }
`;

const HScroll = styled.div`
  flex: 1;
  display: flex;
  justify-content: space-between;
  position: relative;
  background: #efefef;
  border-top: 2.5px solid #000;
`;

const HArrow = styled.div`
  width: 38px;
  display: flex;
  align-items: center;
  justify-content: center;
`;

const HThumb = styled.div`
  position: absolute;
  left: 994px;
  top: 0;
  bottom: 0;
  width: 109px;
  background: #c8c8c8;
`;

const PriceAxis = styled.div`
  width: 131px;
  flex: none;
  display: flex;
  flex-direction: column;
  padding-top: 82px;
  padding-left: 10px;
  border-left: 3px solid #d3d3d3;
  border-right: 3px solid #d3d3d3;
`;

const PriceLabel = styled.div`
  height: 58.1px;
  flex: none;
  display: flex;
  align-items: center;
  font-size: 24.5px;
  color: #111;
`;

const Taskbar = styled.div`
  height: 95px;
  flex: none;
  display: flex;
  align-items: center;
  background: #d3d3d3;
  border-right: 3px solid #bbb;
`;

const TaskSlot = styled.div<{ $active?: boolean; $running?: boolean }>`
  position: relative;
  width: 111px;
  height: 90px;
  margin-top: 5px;
  flex: none;
  display: flex;
  align-items: center;
  justify-content: center;
  background: ${(p) => (p.$active ? "#efefef" : "transparent")};
  &:first-child {
    margin-left: -1.5px;
  }
  &::after {
    content: "";
    display: ${(p) => (p.$running ? "block" : "none")};
    position: absolute;
    left: 10px;
    right: 10px;
    bottom: 0;
    height: 5px;
    background: #0078d7;
  }
`;

const PlaneGlyph = styled.div`
  position: absolute;
  left: 38px;
  top: 30px;
`;

const CountBadge = styled.div<{ $right: number; $bottom: number }>`
  position: absolute;
  right: ${(p) => p.$right}px;
  bottom: ${(p) => p.$bottom}px;
  width: 36px;
  height: 36px;
  border: 2px solid #777;
  border-radius: 50%;
  display: flex;
  align-items: center;
  justify-content: center;
  background: rgba(211, 211, 211, 0.7);
  font-size: 24px;
  color: #111;
`;

const DiscordDisc = styled.div`
  width: 54px;
  height: 54px;
  border-radius: 50%;
  background: #5865f2;
  display: flex;
  align-items: center;
  justify-content: center;
`;

const PyCharmTile = styled.div`
  width: 50px;
  height: 50px;
  padding: 5px;
  background: linear-gradient(135deg, #24d96d 0%, #e2e83a 100%);
`;

const PyCharmInner = styled.div`
  width: 100%;
  height: 100%;
  background: #000;
  color: #fff;
  font-family: "Liberation Sans", sans-serif;
  font-size: 18px;
  font-weight: 700;
  line-height: 20px;
  padding-left: 3px;
`;

const PyCharmBar = styled.div`
  width: 14px;
  height: 3px;
  margin-top: 9px;
  background: #fff;
`;

const Avatar = styled.div`
  position: absolute;
  right: 24px;
  bottom: 9px;
  width: 34px;
  height: 38px;
  border-radius: 50%;
  background: radial-gradient(circle at 50% 40%, #bbb 0%, #777 55%, #444 100%);
`;

const Tray = styled.div`
  margin-left: auto;
  width: 531px;
  height: 95px;
  flex: none;
  display: flex;
  align-items: center;
`;

const TrayIcon = styled.div`
  width: 52px;
  flex: none;
  display: flex;
  align-items: center;
  justify-content: center;
`;

const TrayLang = styled.div`
  margin-left: 21px;
  font-size: 26px;
`;

const Clock = styled.div`
  margin-left: 22px;
  width: 152px;
  flex: none;
  display: flex;
  flex-direction: column;
  align-items: center;
  gap: 8px;
  font-size: 26px;
  line-height: 33px;
`;

const Notification = styled.div`
  position: relative;
  margin-left: 36px;
  width: 36px;
  flex: none;
  height: 54px;
`;

const NoteIcon = styled.div`
  margin-top: 0;
  line-height: 0;
`;

const DialogWindow = styled.div`
  position: absolute;
  left: 983px;
  top: 302px;
  width: 2224px;
  height: 1335px;
  display: flex;
  flex-direction: column;
  background: #fff;
  border-right: 2px solid #bdbdbd;
  border-bottom: 2px solid #bdbdbd;
  box-shadow: 0 0 30px rgba(0, 0, 0, 0.32);
`;

const DialogTitle = styled.div`
  height: 66px;
  flex: none;
  display: flex;
  align-items: center;
  padding-left: 15px;
`;

const DialogTitleText = styled.div`
  margin-left: 5px;
  font-size: 25.3px;
  flex: 1;
  white-space: nowrap;
`;

const DialogButton = styled(WindowButton)`
  margin-bottom: 4px;
  &:last-child {
    margin-right: 0;
  }
`;

const FilterRow = styled.div`
  height: 88px;
  flex: none;
  display: flex;
  align-items: flex-start;
  padding: 15px 0 0 13px;
`;

const FilterLabel = styled.div<{ $gap: number }>`
  height: 56px;
  display: flex;
  align-items: center;
  font-size: 29px;
  padding-right: ${(p) => p.$gap}px;
`;

const SelectBox = styled.div`
  position: relative;
  width: 225px;
  height: 56px;
  margin-right: 12px;
  padding-left: 13px;
  display: flex;
  align-items: center;
  border: 2px solid #adadad;
  background: linear-gradient(180deg, #f0f0f0, #e5e5e5);
  font-size: 29px;
`;

const SelectChevron = styled.div`
  position: absolute;
  right: 13px;
  top: 17px;
  line-height: 0;
`;

const TableArea = styled.div`
  flex: 1;
  min-height: 0;
  display: flex;
`;

const PerfTable = styled.div`
  width: 2175px;
  flex: none;
  display: flex;
  flex-direction: column;
  overflow: hidden;
  margin-left: 2px;
  padding-left: 6px;
  border-top: 2px solid #aaa;
  background: #f6f6f4;
`;

const ROW_COLUMNS = "541px 542px 542px 542px";

const HeaderRow = styled.div`
  height: 90px;
  flex: none;
  display: grid;
  grid-template-columns: ${ROW_COLUMNS};
  border-bottom: 3px solid #8c8c8c;
  background: #f2f2f2;
`;

const HeaderCell = styled.div`
  display: flex;
  align-items: center;
  padding: 2px 0 0 12px;
  font-size: 25px;
  border-right: 2px solid #999;
`;

const RowGroup = styled.div<{ $last?: boolean }>`
  flex: none;
  display: flex;
  flex-direction: column;
  border-bottom: ${(p) => (p.$last ? "none" : "2px solid #999")};
`;

const PerfRow = styled.div`
  height: 56.25px;
  flex: none;
  display: grid;
  grid-template-columns: ${ROW_COLUMNS};
  &:last-child {
    height: 54.25px;
  }
`;

const NameCell = styled.div`
  display: flex;
  align-items: center;
  padding: 5px 0 0 46px;
  font-size: 25.5px;
  background: #f6f6f4;
  border-right: 2px solid #999;
`;

const ValueCell = styled.div<{ $negative?: boolean }>`
  display: flex;
  align-items: center;
  padding: 5px 0 0 46px;
  font-size: 25.5px;
  background: #fff;
  color: ${(p) => (p.$negative ? "#ff0000" : "#111")};
  border-right: 2px solid #999;
`;

const RowGroupFill = styled.div`
  flex: 1;
  display: grid;
  grid-template-columns: ${ROW_COLUMNS};
`;

const NameFill = styled.div`
  background: #f6f6f4;
  border-right: 2px solid #999;
`;

const ValueFill = styled.div`
  background: #fff;
  border-right: 2px solid #999;
`;

const VScroll = styled.div`
  width: 38px;
  flex: none;
  margin-left: 8px;
  display: flex;
  flex-direction: column;
  background: #f0f0f0;
`;

const VArrow = styled.div<{ $bottom?: boolean }>`
  height: 40px;
  flex: none;
  margin-top: ${(p) => (p.$bottom ? "auto" : "0")};
  display: flex;
  align-items: center;
  justify-content: center;
`;

const VThumb = styled.div`
  height: 951px;
  flex: none;
  background: #c8c8c8;
`;

const AnnotationLayer = styled.svg`
  position: absolute;
  left: 0;
  top: 0;
  pointer-events: none;
`;
